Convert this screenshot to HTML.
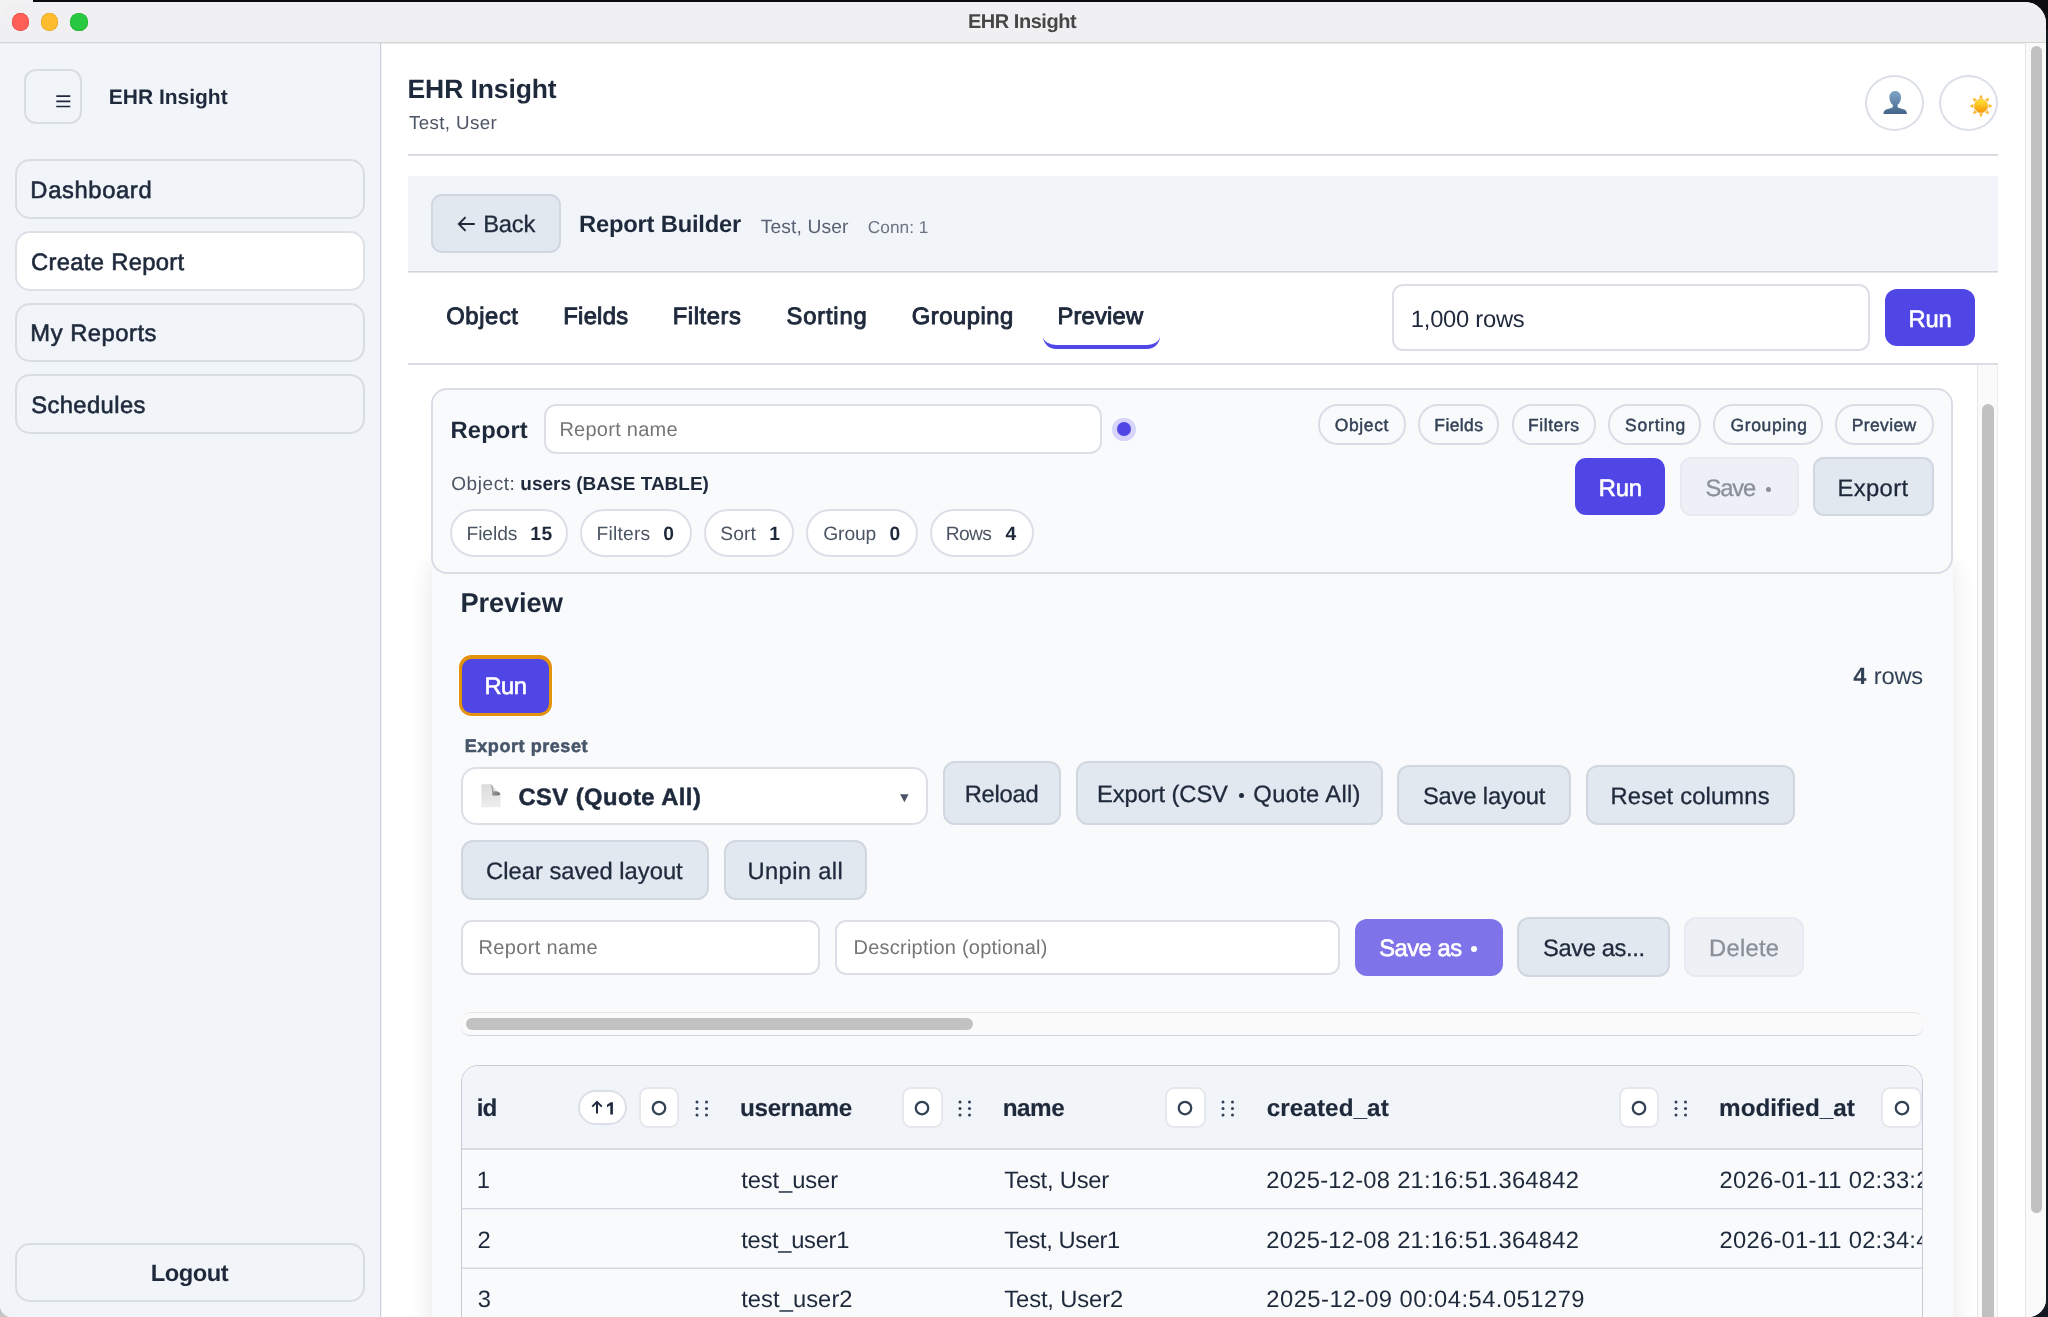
<!DOCTYPE html>
<html><head><meta charset="utf-8"><title>EHR Insight</title>
<style>
html,body{margin:0;padding:0;}
body{width:2048px;height:1317px;overflow:hidden;position:relative;background:#141821;font-family:"Liberation Sans",sans-serif;}
.b{position:absolute;box-sizing:border-box;}
.t{position:absolute;white-space:pre;text-rendering:geometricPrecision;font-family:"Liberation Sans",sans-serif;font-weight:400;}
svg{display:block;overflow:visible;}
</style></head><body>
<div class="b" style="left:0px;top:0px;width:2048px;height:30px;background:#0c0c0e;"></div>
<div class="b" style="left:0px;top:0px;width:33px;height:30px;background:#f2f2f2;"></div>
<div class="b" style="left:0px;top:1290px;width:30px;height:27px;background:#c6c6c8;"></div>
<div class="b" style="left:0;top:2px;width:2046px;height:1315px;background:#fff;border-radius:21px 21px 18px 12px;overflow:hidden">
<div style="will-change:transform;position:absolute;left:0;top:-2px;width:2048px;height:1317px">
<div class="b" style="left:0px;top:0px;width:2048px;height:42px;background:#f0f0f2;"></div>
<div class="b" style="left:0px;top:42px;width:2048px;height:1px;background:#d3d7dc"></div>
<div class="b" style="left:0px;top:43px;width:2048px;height:1px;background:rgba(0,0,0,0.045)"></div>
<div class="b" style="left:11.80px;top:13.30px;width:17.4px;height:17.4px;border-radius:50%;background:#ff5f57;box-shadow:inset 0 0 0 0.6px #e2463f"></div>
<div class="b" style="left:41.10px;top:13.30px;width:17.4px;height:17.4px;border-radius:50%;background:#febc2e;box-shadow:inset 0 0 0 0.6px #dfa023"></div>
<div class="b" style="left:70.30px;top:13.30px;width:17.4px;height:17.4px;border-radius:50%;background:#28c840;box-shadow:inset 0 0 0 0.6px #1dad2b"></div>
<div class="t" style="left:967.89px;top:9px;font-size:20.00px;line-height:26px;letter-spacing:-0.461px;color:#464646;font-weight:700;">EHR Insight</div>
<div class="b" style="left:0px;top:43px;width:380px;height:1274px;background:#f1f4f9;"></div>
<div class="b" style="left:380px;top:43px;width:1px;height:1274px;background:#cacfd9;"></div>
<div class="b" style="left:381px;top:43px;width:1px;height:1274px;background:#f3f4f7;"></div>
<div class="b" style="left:0px;top:43px;width:2048px;height:1px;background:rgba(0,0,0,0.045)"></div>
<div class="b" style="left:24px;top:69px;width:58px;height:55px;border:2px solid #d8dce3;border-radius:12.0px;"></div>
<svg class="b" style="left:56px;top:94px" width="15" height="15" viewBox="0 0 15 15"><g stroke="#1e293b" stroke-width="1.7"><path d="M0.3 2.2H14.3M0.3 7.4H14.3M0.3 12.5H14.3"/></g></svg>
<div class="t" style="left:108.83px;top:84px;font-size:21.00px;line-height:27px;letter-spacing:-0.017px;color:#1e293b;font-weight:700;">EHR Insight</div>
<div class="b" style="left:15px;top:159px;width:350px;height:60px;border:2px solid #d8dce3;border-radius:15.0px;"></div>
<div class="t" style="left:30.36px;top:176px;font-size:23.75px;line-height:30px;letter-spacing:0.631px;color:#1e293b;-webkit-text-stroke:0.60px #1e293b;">Dashboard</div>
<div class="b" style="left:15px;top:231px;width:350px;height:60px;background:#ffffff;border:2px solid #dde0e6;border-radius:15.0px;"></div>
<div class="t" style="left:31.11px;top:248px;font-size:23.75px;line-height:30px;letter-spacing:0.316px;color:#1e293b;-webkit-text-stroke:0.60px #1e293b;">Create Report</div>
<div class="b" style="left:15px;top:303px;width:350px;height:59px;border:2px solid #d8dce3;border-radius:15.0px;"></div>
<div class="t" style="left:30.36px;top:319px;font-size:23.75px;line-height:30px;letter-spacing:0.524px;color:#1e293b;-webkit-text-stroke:0.60px #1e293b;">My Reports</div>
<div class="b" style="left:15px;top:374px;width:350px;height:60px;border:2px solid #d8dce3;border-radius:15.0px;"></div>
<div class="t" style="left:31.24px;top:391px;font-size:23.75px;line-height:30px;letter-spacing:0.405px;color:#1e293b;-webkit-text-stroke:0.60px #1e293b;">Schedules</div>
<div class="b" style="left:15px;top:1243px;width:350px;height:59px;border:2px solid #d8dce3;border-radius:15.0px;"></div>
<div class="t" style="left:150.64px;top:1259px;font-size:23.75px;line-height:30px;letter-spacing:-0.485px;color:#1e293b;font-weight:700;">Logout</div>
<div class="t" style="left:407.55px;top:72px;font-size:26.50px;line-height:34px;letter-spacing:-0.103px;color:#1e293b;font-weight:700;">EHR Insight</div>
<div class="t" style="left:408.93px;top:110px;font-size:18.75px;line-height:25px;letter-spacing:0.379px;color:#4b5563;">Test, User</div>
<div class="b" style="left:1865px;top:75px;width:59px;height:56px;border:2px solid #dbdfe6;border-radius:50%;"></div>
<div class="b" style="left:1939px;top:75px;width:59px;height:56px;border:2px solid #dbdfe6;border-radius:50%;"></div>
<svg class="b" style="left:1883.4px;top:90px" width="25" height="25" viewBox="0 0 25 25"><defs><linearGradient id="ug" x1="0" y1="0" x2="0" y2="1"><stop offset="0" stop-color="#80a6c8"/><stop offset="1" stop-color="#426589"/></linearGradient></defs><path fill="url(#ug)" d="M12.2 0.9C15.6 0.9 18 3.4 18 7.2C18 11 16.4 13.6 14.6 14.8V16.5C14.6 17.3 15.2 17.8 16.2 18.1L20.4 19.3C22.6 19.9 23.8 21.3 24 24H0.4C0.6 21.3 1.8 19.9 4 19.3L8.2 18.1C9.2 17.8 9.8 17.3 9.8 16.5V14.8C8 13.6 6.4 11 6.4 7.2C6.4 3.4 8.8 0.9 12.2 0.9Z"/></svg>
<svg class="b" style="left:1968.7px;top:93.5px" width="24" height="24" viewBox="0 0 24 24"><defs><linearGradient id="sg" x1="0" y1="0" x2="0" y2="1"><stop offset="0" stop-color="#ffe436"/><stop offset="1" stop-color="#f5960a"/></linearGradient></defs><g fill="#fbb92a"><path transform="rotate(0 12 12)" d="M12 0.4L14.1 4.4H9.9Z"/><path transform="rotate(45 12 12)" d="M12 0.4L14.1 4.4H9.9Z"/><path transform="rotate(90 12 12)" d="M12 0.4L14.1 4.4H9.9Z"/><path transform="rotate(135 12 12)" d="M12 0.4L14.1 4.4H9.9Z"/><path transform="rotate(180 12 12)" d="M12 0.4L14.1 4.4H9.9Z"/><path transform="rotate(225 12 12)" d="M12 0.4L14.1 4.4H9.9Z"/><path transform="rotate(270 12 12)" d="M12 0.4L14.1 4.4H9.9Z"/><path transform="rotate(315 12 12)" d="M12 0.4L14.1 4.4H9.9Z"/></g><circle cx="12" cy="12" r="6.7" fill="url(#sg)" stroke="#f2a51c" stroke-width="0.5"/></svg>
<div class="b" style="left:408px;top:154px;width:1590px;height:1px;background:#d4d8dd"></div>
<div class="b" style="left:408px;top:155px;width:1590px;height:1px;background:#dbdfe5"></div>
<div class="b" style="left:408px;top:176px;width:1590px;height:95px;background:#f1f4f9;"></div>
<div class="b" style="left:408px;top:271px;width:1590px;height:1px;background:#d2d5dd"></div>
<div class="b" style="left:408px;top:272px;width:1590px;height:1px;background:#e4e6ea"></div>
<div class="b" style="left:431px;top:194px;width:130px;height:59px;background:#e2e8f0;border:2px solid #d1d7e0;border-radius:11.0px;"></div>
<svg class="b" style="left:457px;top:215px" width="20" height="18" viewBox="0 0 20 18"><path d="M17.8 9H2M8.6 2.2L1.8 9l6.8 6.8" fill="none" stroke="#1e293b" stroke-width="1.9" stroke-linejoin="miter"/></svg>
<div class="t" style="left:483.31px;top:210px;font-size:23.75px;line-height:30px;letter-spacing:-0.279px;color:#1e293b;-webkit-text-stroke:0.30px #1e293b;">Back</div>
<div class="t" style="left:579.04px;top:210px;font-size:23.75px;line-height:30px;letter-spacing:-0.205px;color:#1e293b;font-weight:700;">Report Builder</div>
<div class="t" style="left:760.72px;top:215px;font-size:19.25px;line-height:25px;letter-spacing:0.122px;color:#596273;">Test, User</div>
<div class="t" style="left:867.82px;top:215px;font-size:17.25px;line-height:24px;letter-spacing:0.025px;color:#6b7280;">Conn: 1</div>
<div class="t" style="left:446.25px;top:302px;font-size:23.75px;line-height:30px;letter-spacing:0.615px;color:#1e293b;-webkit-text-stroke:0.95px #1e293b;">Object</div>
<div class="t" style="left:563.34px;top:302px;font-size:23.75px;line-height:30px;letter-spacing:0.265px;color:#1e293b;-webkit-text-stroke:0.95px #1e293b;">Fields</div>
<div class="t" style="left:672.74px;top:302px;font-size:23.75px;line-height:30px;letter-spacing:0.579px;color:#1e293b;-webkit-text-stroke:0.95px #1e293b;">Filters</div>
<div class="t" style="left:786.51px;top:302px;font-size:23.75px;line-height:30px;letter-spacing:0.827px;color:#1e293b;-webkit-text-stroke:0.95px #1e293b;">Sorting</div>
<div class="t" style="left:911.69px;top:302px;font-size:23.75px;line-height:30px;letter-spacing:0.550px;color:#1e293b;-webkit-text-stroke:0.95px #1e293b;">Grouping</div>
<div class="t" style="left:1057.44px;top:302px;font-size:23.75px;line-height:30px;letter-spacing:0.188px;color:#1e293b;-webkit-text-stroke:0.95px #1e293b;">Preview</div>
<div class="b" style="left:1043px;top:300px;width:116.8px;height:48.5px;border-bottom:4.4px solid #4f46e5;border-radius:13px;box-sizing:border-box"></div>
<div class="b" style="left:1392px;top:284px;width:478px;height:67px;background:#fff;border:2px solid #dcdfe5;border-radius:11.0px;"></div>
<div class="t" style="left:1410.85px;top:305px;font-size:23.75px;line-height:30px;letter-spacing:-0.258px;color:#1e293b;">1,000 rows</div>
<div class="b" style="left:1885px;top:289px;width:90px;height:57px;background:#4f46e5;border-radius:12.0px;"></div>
<div class="t" style="left:1908.46px;top:305px;font-size:23.75px;line-height:30px;letter-spacing:-0.162px;color:#fff;-webkit-text-stroke:0.60px #fff;">Run</div>
<div class="b" style="left:408px;top:363px;width:1590px;height:1px;background:#d8dbe0"></div>
<div class="b" style="left:408px;top:364px;width:1590px;height:1px;background:#dadde3"></div>
<div class="b" style="left:1977px;top:365px;width:21px;height:952px;background:#fafafa;"></div>
<div class="b" style="left:1977px;top:365px;width:1px;height:952px;background:#e6e6e6;"></div>
<div class="b" style="left:1997px;top:365px;width:1px;height:952px;background:#ededed;"></div>
<div class="b" style="left:1982px;top:404px;width:12px;height:996px;background:#c1c1c1;border-radius:6.0px;"></div>
<div class="b" style="left:2025px;top:43px;width:23px;height:1274px;background:#fafafa;"></div>
<div class="b" style="left:2025px;top:43px;width:1px;height:1274px;background:#e6e6e6;"></div>
<div class="b" style="left:2031px;top:46px;width:11px;height:1167px;background:#c1c1c1;border-radius:6.0px;"></div>
<div class="b" style="left:431.5px;top:556px;width:1521.5px;height:900px;background:#f8fafc;box-shadow:0 4px 26px rgba(15,23,42,0.10);border-radius:16px 16px 0 0"></div>
<div class="b" style="left:1977px;top:365px;width:1px;height:952px;background:#e6e6e6;"></div>
<div class="b" style="left:431px;top:388px;width:1522px;height:186px;background:#f8fafc;border:2px solid #dadde6;border-radius:16.0px;"></div>
<div class="t" style="left:450.54px;top:416px;font-size:23.75px;line-height:30px;letter-spacing:0.122px;color:#1e293b;font-weight:700;">Report</div>
<div class="b" style="left:544px;top:404px;width:558px;height:50px;background:#fff;border:2px solid #dcdfe5;border-radius:12.0px;"></div>
<div class="t" style="left:559.38px;top:417px;font-size:20.00px;line-height:26px;letter-spacing:0.267px;color:#757575;">Report name</div>
<div class="b" style="left:1112.4px;top:417.5px;width:23.4px;height:23.4px;border-radius:50%;background:#d6d4f8"></div>
<div class="b" style="left:1117.0px;top:422.1px;width:14.2px;height:14.2px;border-radius:50%;background:#4f46e5"></div>
<div class="b" style="left:1318px;top:404px;width:88px;height:41px;background:#f8fafc;border:2px solid #dadde6;border-radius:20.0px;"></div>
<div class="t" style="left:1334.71px;top:413px;font-size:17.50px;line-height:24px;letter-spacing:0.625px;color:#334155;-webkit-text-stroke:0.45px #334155;">Object</div>
<div class="b" style="left:1418px;top:404px;width:81px;height:41px;background:#f8fafc;border:2px solid #dadde6;border-radius:20.0px;"></div>
<div class="t" style="left:1434.35px;top:413px;font-size:17.50px;line-height:24px;letter-spacing:0.373px;color:#334155;-webkit-text-stroke:0.45px #334155;">Fields</div>
<div class="b" style="left:1512px;top:404px;width:84px;height:41px;background:#f8fafc;border:2px solid #dadde6;border-radius:20.0px;"></div>
<div class="t" style="left:1528.05px;top:413px;font-size:17.50px;line-height:24px;letter-spacing:0.554px;color:#334155;-webkit-text-stroke:0.45px #334155;">Filters</div>
<div class="b" style="left:1608px;top:404px;width:93px;height:41px;background:#f8fafc;border:2px solid #dadde6;border-radius:20.0px;"></div>
<div class="t" style="left:1624.97px;top:413px;font-size:17.50px;line-height:24px;letter-spacing:0.815px;color:#334155;-webkit-text-stroke:0.45px #334155;">Sorting</div>
<div class="b" style="left:1713px;top:404px;width:110px;height:41px;background:#f8fafc;border:2px solid #dadde6;border-radius:20.0px;"></div>
<div class="t" style="left:1730.55px;top:413px;font-size:17.50px;line-height:24px;letter-spacing:0.621px;color:#334155;-webkit-text-stroke:0.45px #334155;">Grouping</div>
<div class="b" style="left:1835px;top:404px;width:99px;height:41px;background:#f8fafc;border:2px solid #dadde6;border-radius:20.0px;"></div>
<div class="t" style="left:1851.75px;top:413px;font-size:17.50px;line-height:24px;letter-spacing:0.369px;color:#334155;-webkit-text-stroke:0.45px #334155;">Preview</div>
<div class="b" style="left:1575px;top:458px;width:90px;height:57px;background:#4f46e5;border-radius:11.0px;"></div>
<div class="t" style="left:1598.86px;top:474px;font-size:23.75px;line-height:30px;letter-spacing:-0.262px;color:#fff;-webkit-text-stroke:0.60px #fff;">Run</div>
<div class="b" style="left:1680px;top:457px;width:119px;height:59px;background:#edf0f7;border:2px solid #e7eaf1;border-radius:11.0px;"></div>
<div class="t" style="left:1705.49px;top:474px;font-size:23.75px;line-height:30px;letter-spacing:-1.121px;color:#8a8f9a;-webkit-text-stroke:0.30px #8a8f9a;">Save</div>
<div class="b" style="left:1766px;top:487.3px;width:5.2px;height:5.2px;border-radius:50%;background:#8a8f9a"></div>
<div class="b" style="left:1813px;top:457px;width:121px;height:59px;background:#e2e8f0;border:2px solid #d1d7e0;border-radius:11.0px;"></div>
<div class="t" style="left:1837.41px;top:474px;font-size:23.75px;line-height:30px;letter-spacing:0.407px;color:#1e293b;-webkit-text-stroke:0.30px #1e293b;">Export</div>
<div class="t" style="left:451.23px;top:472px;font-size:19.00px;line-height:25px;letter-spacing:0.579px;color:#4b5563;">Object:</div>
<div class="t" style="left:520.27px;top:472px;font-size:19.00px;line-height:25px;letter-spacing:0.004px;color:#1e293b;font-weight:700;">users (BASE TABLE)</div>
<div class="b" style="left:450px;top:509px;width:118px;height:48px;background:#fff;border:2px solid #dcdfe7;border-radius:24.0px;"></div>
<div class="t" style="left:466.54px;top:522px;font-size:19.25px;line-height:25px;letter-spacing:-0.105px;color:#4b5563;">Fields</div>
<div class="t" style="left:530.31px;top:522px;font-size:19.25px;line-height:25px;letter-spacing:0.612px;color:#1e293b;font-weight:700;">15</div>
<div class="b" style="left:580px;top:509px;width:112px;height:48px;background:#fff;border:2px solid #dcdfe7;border-radius:24.0px;"></div>
<div class="t" style="left:596.54px;top:522px;font-size:19.25px;line-height:25px;letter-spacing:0.196px;color:#4b5563;">Filters</div>
<div class="t" style="left:663.25px;top:522px;font-size:19.25px;line-height:25px;letter-spacing:0.000px;color:#1e293b;font-weight:700;">0</div>
<div class="b" style="left:704px;top:509px;width:90px;height:48px;background:#fff;border:2px solid #dcdfe7;border-radius:24.0px;"></div>
<div class="t" style="left:720.32px;top:522px;font-size:19.25px;line-height:25px;letter-spacing:0.062px;color:#4b5563;">Sort</div>
<div class="t" style="left:769.21px;top:522px;font-size:19.25px;line-height:25px;letter-spacing:0.000px;color:#1e293b;font-weight:700;">1</div>
<div class="b" style="left:806px;top:509px;width:112px;height:48px;background:#fff;border:2px solid #dcdfe7;border-radius:24.0px;"></div>
<div class="t" style="left:823.26px;top:522px;font-size:19.25px;line-height:25px;letter-spacing:-0.128px;color:#4b5563;">Group</div>
<div class="t" style="left:889.45px;top:522px;font-size:19.25px;line-height:25px;letter-spacing:0.000px;color:#1e293b;font-weight:700;">0</div>
<div class="b" style="left:930px;top:509px;width:104px;height:48px;background:#fff;border:2px solid #dcdfe7;border-radius:24.0px;"></div>
<div class="t" style="left:945.64px;top:522px;font-size:19.25px;line-height:25px;letter-spacing:-0.592px;color:#4b5563;">Rows</div>
<div class="t" style="left:1005.55px;top:522px;font-size:19.25px;line-height:25px;letter-spacing:0.000px;color:#1e293b;font-weight:700;">4</div>
<div class="t" style="left:460.39px;top:585px;font-size:27.25px;line-height:35px;letter-spacing:-0.092px;color:#1e293b;font-weight:700;">Preview</div>
<div class="b" style="left:459px;top:655px;width:93px;height:61px;background:#e2920b;border-radius:12.5px;box-shadow:0 0 0 1px rgba(255,255,255,0.85);"></div>
<div class="b" style="left:462px;top:659px;width:87px;height:54px;background:#4f46e5;border-radius:9.5px;"></div>
<div class="t" style="left:484.46px;top:672px;font-size:23.75px;line-height:30px;letter-spacing:-0.563px;color:#fff;-webkit-text-stroke:0.60px #fff;">Run</div>
<div class="t" style="left:1853.19px;top:662px;font-size:23.75px;line-height:30px;letter-spacing:0.000px;color:#334155;font-weight:700;">4</div>
<div class="t" style="left:1873.84px;top:662px;font-size:23.75px;line-height:30px;letter-spacing:-0.250px;color:#334155;">rows</div>
<div class="t" style="left:464.69px;top:734px;font-size:18.00px;line-height:24px;letter-spacing:0.564px;color:#475569;font-weight:700;-webkit-text-stroke:0.55px #475569;">Export preset</div>
<div class="b" style="left:461px;top:767px;width:467px;height:58px;background:#fff;border:2px solid #dcdfe5;border-radius:15.0px;"></div>
<svg class="b" style="left:481.4px;top:783.7px" width="20" height="24" viewBox="0 0 20 24"><defs><linearGradient id="pg" x1="0" y1="0" x2="0" y2="1"><stop offset="0" stop-color="#dcdcdc"/><stop offset="1" stop-color="#ededed"/></linearGradient><linearGradient id="fg" x1="0" y1="0" x2="1" y2="1"><stop offset="0" stop-color="#b9b9b9"/><stop offset="1" stop-color="#6f6f6f"/></linearGradient></defs><path d="M0.300 0.300H9.500L19.500 10.200V23.200H0.300Z" fill="url(#pg)"/><path d="M9.200 0.300C11.500 0.800 12.300 2.300 12.200 5.000 12.100 6.800 12.300 7.300 13.500 7.400 16.800 7.200 18.800 8.000 19.500 10.400 17.500 11.600 14.500 11.800 11.200 11.300 11.400 7.500 11.200 3.500 9.200 0.300Z" fill="url(#fg)"/></svg>
<div class="t" style="left:518.41px;top:783px;font-size:23.75px;line-height:30px;letter-spacing:0.463px;color:#1e293b;font-weight:700;-webkit-text-stroke:0.50px #1e293b;">CSV (Quote All)</div>
<svg class="b" style="left:899.5px;top:794.2px" width="9" height="9" viewBox="0 0 9 9"><path d="M0.2 0.2H8.600L4.400 8.300Z" fill="#4a5565"/></svg>
<div class="b" style="left:943px;top:761px;width:118px;height:64px;background:#e2e8f0;border:2px solid #d1d7e0;border-radius:12.0px;"></div>
<div class="t" style="left:964.71px;top:780px;font-size:23.75px;line-height:30px;letter-spacing:-0.242px;color:#1e293b;-webkit-text-stroke:0.30px #1e293b;">Reload</div>
<div class="b" style="left:1076px;top:761px;width:307px;height:64px;background:#e2e8f0;border:2px solid #d1d7e0;border-radius:12.0px;"></div>
<div class="t" style="left:1097.11px;top:780px;font-size:23.75px;line-height:30px;letter-spacing:-0.114px;color:#1e293b;-webkit-text-stroke:0.30px #1e293b;">Export (CSV</div>
<div class="b" style="left:1239px;top:792.8px;width:5px;height:5px;border-radius:50%;background:#1e293b"></div>
<div class="t" style="left:1253.33px;top:780px;font-size:23.75px;line-height:30px;letter-spacing:0.324px;color:#1e293b;-webkit-text-stroke:0.30px #1e293b;">Quote All)</div>
<div class="b" style="left:1397px;top:765px;width:174px;height:60px;background:#e2e8f0;border:2px solid #d1d7e0;border-radius:12.0px;"></div>
<div class="t" style="left:1422.89px;top:782px;font-size:23.75px;line-height:30px;letter-spacing:-0.158px;color:#1e293b;-webkit-text-stroke:0.30px #1e293b;">Save layout</div>
<div class="b" style="left:1586px;top:765px;width:209px;height:60px;background:#e2e8f0;border:2px solid #d1d7e0;border-radius:12.0px;"></div>
<div class="t" style="left:1610.51px;top:782px;font-size:23.75px;line-height:30px;letter-spacing:0.166px;color:#1e293b;-webkit-text-stroke:0.30px #1e293b;">Reset columns</div>
<div class="b" style="left:461px;top:840px;width:248px;height:60px;background:#e2e8f0;border:2px solid #d1d7e0;border-radius:12.0px;"></div>
<div class="t" style="left:486.06px;top:857px;font-size:23.75px;line-height:30px;letter-spacing:-0.004px;color:#1e293b;-webkit-text-stroke:0.30px #1e293b;">Clear saved layout</div>
<div class="b" style="left:724px;top:840px;width:143px;height:60px;background:#e2e8f0;border:2px solid #d1d7e0;border-radius:12.0px;"></div>
<div class="t" style="left:747.54px;top:857px;font-size:23.75px;line-height:30px;letter-spacing:0.350px;color:#1e293b;-webkit-text-stroke:0.30px #1e293b;">Unpin all</div>
<div class="b" style="left:461px;top:920px;width:359px;height:55px;background:#fff;border:2px solid #dcdfe5;border-radius:11.0px;"></div>
<div class="t" style="left:478.57px;top:935px;font-size:20.00px;line-height:26px;letter-spacing:0.347px;color:#757575;">Report name</div>
<div class="b" style="left:835px;top:920px;width:505px;height:55px;background:#fff;border:2px solid #dcdfe5;border-radius:11.0px;"></div>
<div class="t" style="left:853.57px;top:935px;font-size:20.00px;line-height:26px;letter-spacing:0.232px;color:#757575;">Description (optional)</div>
<div class="b" style="left:1355px;top:919px;width:148px;height:57px;background:#7f73ea;border-radius:12.0px;"></div>
<div class="t" style="left:1379.14px;top:934px;font-size:23.75px;line-height:30px;letter-spacing:-0.490px;color:#fff;-webkit-text-stroke:0.60px #fff;">Save as</div>
<div class="b" style="left:1471.2px;top:946px;width:6.2px;height:6.2px;border-radius:50%;background:#fff"></div>
<div class="b" style="left:1517px;top:917px;width:153px;height:60px;background:#e2e8f0;border:2px solid #d1d7e0;border-radius:12.0px;"></div>
<div class="t" style="left:1542.99px;top:934px;font-size:23.75px;line-height:30px;letter-spacing:-0.386px;color:#1e293b;-webkit-text-stroke:0.30px #1e293b;">Save as...</div>
<div class="b" style="left:1684px;top:917px;width:120px;height:60px;background:#edf0f5;border:2px solid #e7eaf1;border-radius:12.0px;"></div>
<div class="t" style="left:1709.11px;top:934px;font-size:23.75px;line-height:30px;letter-spacing:0.243px;color:#8a8f9a;-webkit-text-stroke:0.30px #8a8f9a;">Delete</div>
<div class="b" style="left:461px;top:1012px;width:1462px;height:24px;background:#fafafa;border-top:1px solid #e6e6e6;border-bottom:1px solid #ccd1da;border-radius:9px;box-sizing:border-box;overflow:hidden"></div>
<div class="b" style="left:466px;top:1018px;width:507px;height:12px;background:#c1c1c1;border-radius:6.0px;"></div>
<div class="b" style="left:461px;top:1065px;width:1462px;height:300px;border:1px solid #c7ccd8;border-radius:17px 17px 0 0;box-sizing:border-box;background:#f8fafc;overflow:hidden">
<div style="position:absolute;left:-462px;top:-1066px;width:2048px;height:1400px">
<div class="b" style="left:461px;top:1065px;width:1463px;height:84px;background:#f1f4f9;"></div>
<div class="b" style="left:461px;top:1148px;width:1463px;height:1px;background:#d7dae2"></div>
<div class="b" style="left:461px;top:1149px;width:1463px;height:1px;background:#d8dbe2"></div>
<div class="b" style="left:461px;top:1208px;width:1463px;height:1px;background:#d3d7df"></div>
<div class="b" style="left:461px;top:1209px;width:1463px;height:1px;background:#eceef3"></div>
<div class="b" style="left:461px;top:1267px;width:1463px;height:1px;background:#e9ebf0"></div>
<div class="b" style="left:461px;top:1268px;width:1463px;height:1px;background:#d3d7df"></div>
<div class="t" style="left:476.69px;top:1093px;font-size:24.25px;line-height:31px;letter-spacing:-0.963px;color:#1e293b;font-weight:700;-webkit-text-stroke:0.15px #1e293b;">id</div>
<div class="t" style="left:740.08px;top:1093px;font-size:24.25px;line-height:31px;letter-spacing:-0.343px;color:#1e293b;font-weight:700;-webkit-text-stroke:0.15px #1e293b;">username</div>
<div class="t" style="left:1002.71px;top:1093px;font-size:24.25px;line-height:31px;letter-spacing:-0.450px;color:#1e293b;font-weight:700;-webkit-text-stroke:0.15px #1e293b;">name</div>
<div class="t" style="left:1266.64px;top:1093px;font-size:24.25px;line-height:31px;letter-spacing:0.092px;color:#1e293b;font-weight:700;-webkit-text-stroke:0.15px #1e293b;">created_at</div>
<div class="t" style="left:1719.11px;top:1093px;font-size:24.25px;line-height:31px;letter-spacing:-0.040px;color:#1e293b;font-weight:700;-webkit-text-stroke:0.15px #1e293b;">modified_at</div>
<div class="b" style="left:578px;top:1090px;width:49px;height:35px;background:#fff;border:2px solid #dcdfe7;border-radius:17.5px;"></div>
<svg class="b" style="left:590.9px;top:1100.3px" width="12" height="15" viewBox="0 0 12 15"><path d="M6 13.4V1.9M1.2 6.6L6 1.8l4.8 4.8" fill="none" stroke="#1e293b" stroke-width="1.95"/></svg>
<svg class="b" style="left:605.5px;top:1101.6px" width="8" height="13" viewBox="0 0 8 13"><path d="M6.9 0.3V12.4H4.3V3.2L1 5.2V2.7L4.7 0.3Z" fill="#1e293b"/></svg>
<div class="b" style="left:639px;top:1087px;width:40px;height:41px;background:#fff;border:2px solid #e5e7ec;border-radius:9.0px;"></div>
<svg class="b" style="left:649.9px;top:1098.8px" width="18" height="18" viewBox="0 0 18 18"><circle cx="9" cy="9" r="6.25" fill="none" stroke="#334155" stroke-width="2.25"/></svg>
<svg class="b" style="left:694.8px;top:1100.0px" width="15" height="18" viewBox="0 0 15 18"><g fill="#334155"><circle cx="2.0" cy="2.0" r="1.5"/><circle cx="2.0" cy="8.5" r="1.5"/><circle cx="2.0" cy="15.0" r="1.5"/><circle cx="11.5" cy="2.0" r="1.5"/><circle cx="11.5" cy="8.5" r="1.5"/><circle cx="11.5" cy="15.0" r="1.5"/></g></svg>
<div class="b" style="left:902px;top:1087px;width:41px;height:41px;background:#fff;border:2px solid #e5e7ec;border-radius:9.0px;"></div>
<svg class="b" style="left:913.3px;top:1098.8px" width="18" height="18" viewBox="0 0 18 18"><circle cx="9" cy="9" r="6.25" fill="none" stroke="#334155" stroke-width="2.25"/></svg>
<svg class="b" style="left:958.3px;top:1100.0px" width="15" height="18" viewBox="0 0 15 18"><g fill="#334155"><circle cx="2.0" cy="2.0" r="1.5"/><circle cx="2.0" cy="8.5" r="1.5"/><circle cx="2.0" cy="15.0" r="1.5"/><circle cx="11.5" cy="2.0" r="1.5"/><circle cx="11.5" cy="8.5" r="1.5"/><circle cx="11.5" cy="15.0" r="1.5"/></g></svg>
<div class="b" style="left:1165px;top:1087px;width:41px;height:41px;background:#fff;border:2px solid #e5e7ec;border-radius:9.0px;"></div>
<svg class="b" style="left:1176.4px;top:1098.8px" width="18" height="18" viewBox="0 0 18 18"><circle cx="9" cy="9" r="6.25" fill="none" stroke="#334155" stroke-width="2.25"/></svg>
<svg class="b" style="left:1221.2px;top:1100.0px" width="15" height="18" viewBox="0 0 15 18"><g fill="#334155"><circle cx="2.0" cy="2.0" r="1.5"/><circle cx="2.0" cy="8.5" r="1.5"/><circle cx="2.0" cy="15.0" r="1.5"/><circle cx="11.5" cy="2.0" r="1.5"/><circle cx="11.5" cy="8.5" r="1.5"/><circle cx="11.5" cy="15.0" r="1.5"/></g></svg>
<div class="b" style="left:1619px;top:1087px;width:40px;height:41px;background:#fff;border:2px solid #e5e7ec;border-radius:9.0px;"></div>
<svg class="b" style="left:1629.8px;top:1098.8px" width="18" height="18" viewBox="0 0 18 18"><circle cx="9" cy="9" r="6.25" fill="none" stroke="#334155" stroke-width="2.25"/></svg>
<svg class="b" style="left:1674.3px;top:1100.0px" width="15" height="18" viewBox="0 0 15 18"><g fill="#334155"><circle cx="2.0" cy="2.0" r="1.5"/><circle cx="2.0" cy="8.5" r="1.5"/><circle cx="2.0" cy="15.0" r="1.5"/><circle cx="11.5" cy="2.0" r="1.5"/><circle cx="11.5" cy="8.5" r="1.5"/><circle cx="11.5" cy="15.0" r="1.5"/></g></svg>
<div class="b" style="left:1881px;top:1087px;width:41px;height:41px;background:#fff;border:2px solid #e5e7ec;border-radius:9.0px;"></div>
<svg class="b" style="left:1892.5px;top:1098.8px" width="18" height="18" viewBox="0 0 18 18"><circle cx="9" cy="9" r="6.25" fill="none" stroke="#334155" stroke-width="2.25"/></svg>
<div class="t" style="left:476.85px;top:1166px;font-size:23.75px;line-height:30px;letter-spacing:0.000px;color:#1e293b;">1</div>
<div class="t" style="left:741.19px;top:1166px;font-size:23.75px;line-height:30px;letter-spacing:-0.095px;color:#1e293b;">test_user</div>
<div class="t" style="left:1004.30px;top:1166px;font-size:23.75px;line-height:30px;letter-spacing:-0.218px;color:#1e293b;">Test, User</div>
<div class="t" style="left:1266.31px;top:1166px;font-size:23.75px;line-height:30px;letter-spacing:0.250px;color:#1e293b;">2025-12-08 21:16:51.364842</div>
<div class="t" style="left:1719.61px;top:1166px;font-size:23.75px;line-height:30px;letter-spacing:0.250px;color:#1e293b;">2026-01-11 02:33:21.481516</div>
<div class="t" style="left:477.41px;top:1226px;font-size:23.75px;line-height:30px;letter-spacing:0.000px;color:#1e293b;">2</div>
<div class="t" style="left:741.19px;top:1226px;font-size:23.75px;line-height:30px;letter-spacing:-0.304px;color:#1e293b;">test_user1</div>
<div class="t" style="left:1004.30px;top:1226px;font-size:23.75px;line-height:30px;letter-spacing:-0.424px;color:#1e293b;">Test, User1</div>
<div class="t" style="left:1266.31px;top:1226px;font-size:23.75px;line-height:30px;letter-spacing:0.250px;color:#1e293b;">2025-12-08 21:16:51.364842</div>
<div class="t" style="left:1719.61px;top:1226px;font-size:23.75px;line-height:30px;letter-spacing:0.250px;color:#1e293b;">2026-01-11 02:34:41.481516</div>
<div class="t" style="left:477.73px;top:1285px;font-size:23.75px;line-height:30px;letter-spacing:0.000px;color:#1e293b;">3</div>
<div class="t" style="left:741.19px;top:1285px;font-size:23.75px;line-height:30px;letter-spacing:0.051px;color:#1e293b;">test_user2</div>
<div class="t" style="left:1004.30px;top:1285px;font-size:23.75px;line-height:30px;letter-spacing:-0.124px;color:#1e293b;">Test, User2</div>
<div class="t" style="left:1266.31px;top:1285px;font-size:23.75px;line-height:30px;letter-spacing:0.475px;color:#1e293b;">2025-12-09 00:04:54.051279</div>
</div></div>
</div></div>
</body></html>
